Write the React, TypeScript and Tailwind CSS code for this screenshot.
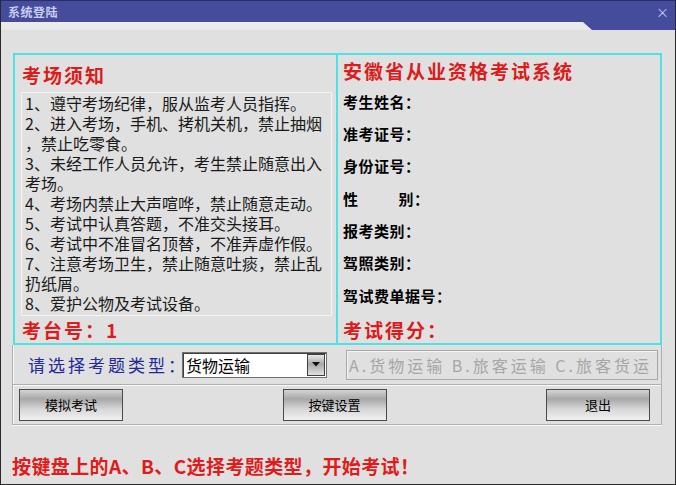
import React from "react";

const rules = [
  "1、遵守考场纪律，服从监考人员指挥。",
  "2、进入考场，手机、拷机关机，禁止抽烟",
  "，禁止吃零食。",
  "3、未经工作人员允许，考生禁止随意出入",
  "考场。",
  "4、考场内禁止大声喧哗，禁止随意走动。",
  "5、考试中认真答题，不准交头接耳。",
  "6、考试中不准冒名顶替，不准弄虚作假。",
  "7、注意考场卫生，禁止随意吐痰，禁止乱",
  "扔纸屑。",
  "8、爱护公物及考试设备。",
];

const labels = ["考生姓名：", "准考证号：", "身份证号：", "SEX", "报考类别：", "驾照类别：", "驾试费单据号："];

function Btn({ children }: { children: React.ReactNode }) {
  return (
    <div className="w-[104px] h-[32px] border border-[#4a4a4a] flex items-center justify-center text-[13px] text-black bg-[linear-gradient(to_bottom,#d4d4d4_0%,#a8a8a8_30%,#d8d8d8_65%,#f0f0f0_100%)]">
      {children}
    </div>
  );
}

export default function App() {
  return (
    <div className="w-[676px] h-[485px] bg-[#e0e0e0] border-l border-r border-b border-[#2a2a2a] overflow-hidden font-['Noto_Sans_CJK_SC','Noto_Sans',sans-serif]">
      {/* title bar */}
      <div className="flex h-[30px] bg-[linear-gradient(to_bottom,#f6f6f6_0%,#e8e8e8_100%)]">
        <div className="flex-1 h-[22px] bg-[#454c9c] border-t border-[#2a2e66] flex items-center pl-[7px]">
          <span className="text-[12px] font-bold text-[#c9cdf2] tracking-[0.5px] leading-none">系统登陆</span>
        </div>
        <div className="w-[92px] h-[30px] bg-[#454c9c] border-t border-[#2a2e66] [clip-path:polygon(0_0,100%_0,100%_100%,9px_100%,0_22px)] flex justify-end pr-[6px] pt-[4px]">
          <span className="text-[13px] text-[#c9cdf2] leading-none">×</span>
        </div>
      </div>

      {/* cyan info box */}
      <div className="ml-[12px] mt-[23px] w-[649px] h-[292px] border-2 border-[#4ee2e2] flex">
        {/* left panel */}
        <div className="w-[321px] flex flex-col">
          <div className="mt-[8px] h-[24px] leading-[24px] pl-[7px] text-[19px] font-bold text-[#dc1c1c] tracking-[2px]">考场须知</div>
          <div className="ml-[6px] mt-[5px] w-[311px] h-[224px] border border-[#f4f4f4] pl-[3px] text-[16px] text-[#1a1a1a]">
            {rules.map((r, i) => (
              <div key={i} className="h-[20px] leading-[20px] whitespace-nowrap">{r}</div>
            ))}
          </div>
          <div className="mt-[2px] h-[24px] leading-[24px] pl-[7px] text-[19px] font-bold text-[#dc1c1c] tracking-[2px]">考台号：1</div>
        </div>
        <div className="w-[2px] bg-[#4ee2e2]" />
        {/* right panel */}
        <div className="flex-1 flex flex-col pl-[5px]">
          <div className="mt-[1px] h-[30px] leading-[30px] text-[19px] font-bold text-[#dc1c1c] tracking-[2px] whitespace-nowrap">安徽省从业资格考试系统</div>
          {labels.map((l, i) => (
            <div key={i} className="h-[32.5px] flex items-center text-[15px] font-bold text-black tracking-[0.5px] whitespace-nowrap">
              {l === "SEX" ? (
                <>
                  <span>性</span>
                  <span className="ml-[40px]">别：</span>
                </>
              ) : (
                l
              )}
            </div>
          ))}
          <div className="pt-[5px] h-[31px] leading-[26px] text-[19px] font-bold text-[#dc1c1c] tracking-[2px]">考试得分：</div>
        </div>
      </div>

      {/* group box */}
      <div className="ml-[11px] w-[650px] h-[80px] border-l border-r border-b border-[#b0b0b0] shadow-[inset_1px_0_0_#f8f8f8,0_1px_0_#f8f8f8] flex flex-col">
        <div className="h-[40px] flex items-center border-b border-[#b0b0b0] shadow-[0_1px_0_#f8f8f8]">
          <span className="ml-[15px] w-[152px] text-[17px] text-[#22299c] tracking-[3px] whitespace-nowrap leading-none">请选择考题类型：</span>
          <div className="ml-[2px] w-[145px] h-[26px] bg-white border border-[#707070] shadow-[inset_1px_1px_0_#404040] flex items-center">
            <span className="flex-1 pl-[3px] text-[16px] text-black leading-none">货物运输</span>
            <div className="w-[18px] h-[22px] mr-[1px] border border-[#404040] bg-[linear-gradient(to_bottom,#e8e8e8_0%,#a8a8a8_45%,#e0e0e0_100%)] flex items-center justify-center">
              <svg width="8" height="5" viewBox="0 0 8 5">
                <path d="M0 0 H8 L4 4.5 Z" fill="#111" />
              </svg>
            </div>
          </div>
          <div className="ml-[19px] w-[312px] h-[30px] border border-[#a8a8a8] shadow-[inset_1px_1px_0_#f4f4f4] flex items-center pl-[2px]">
            <span className="text-[16px] text-[#a6a6a6] tracking-[3px] whitespace-nowrap leading-none">A.货物运输 B.旅客运输 C.旅客货运</span>
          </div>
        </div>
        <div className="flex-1 flex items-center justify-between pl-[6px] pr-[11px]">
          <Btn>模拟考试</Btn>
          <Btn>按键设置</Btn>
          <Btn>退出</Btn>
        </div>
      </div>

      {/* bottom hint */}
      <div className="mt-[28px] ml-[11px] h-[26px] leading-[26px] text-[19px] font-bold text-[#e01b1b] whitespace-nowrap tracking-[0.4px]">
        按键盘上的A、B、C选择考题类型，开始考试！
      </div>
    </div>
  );
}
